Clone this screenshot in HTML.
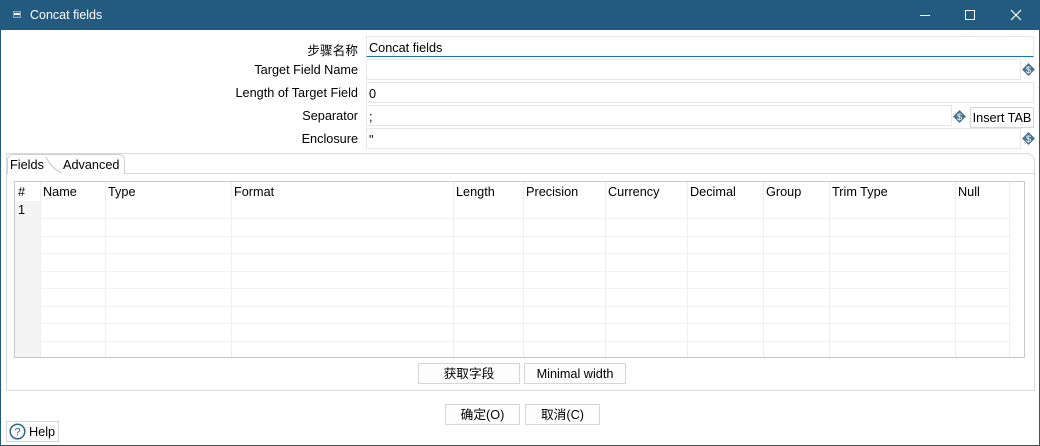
<!DOCTYPE html>
<html><head><meta charset="utf-8"><style>
*{box-sizing:border-box;margin:0;padding:0}
body{width:1040px;height:446px;overflow:hidden;background:#fff;font-family:"Liberation Sans","Noto Sans CJK SC",sans-serif;font-size:12.7px;color:#000;position:relative}
.a{position:absolute}
#win{left:0;top:0;width:1040px;height:446px;border:1px solid #235a80;border-top:none}
#tb{left:0;top:0;width:1040px;height:30px;background:#235a80;color:#fff}
.lbl{text-align:right;width:300px;left:58px}
.in{background:#fff;border:1px solid #e6e6e6;height:21px;padding:3px 2px 1px;line-height:17px}
.btn{background:#fdfdfd;border:1px solid #d6d6d6;text-align:center;line-height:20px;height:21px}
.dl{width:13px;height:13px}
.hd{top:183px;height:19px;line-height:19px;padding-left:3px}
.vl{top:182px;width:1px;height:175px;background:#eeeeee}
.hl{left:40px;width:969px;height:1px;background:#f1f1f1}
</style></head><body>
<div class="a" id="win"></div>
<div class="a" id="tb">
 <div class="a" style="left:13px;top:11px;width:8px;height:7px;background:#3b6a8c;border:1px solid #8aa6bd"></div>
 <div class="a" style="left:14px;top:13px;width:6px;height:2px;background:#fff"></div>
 <div class="a" style="left:30px;top:8px;font-size:12.5px">Concat fields</div>
 <div class="a" style="left:920px;top:15px;width:10px;height:1px;background:#fff"></div>
 <div class="a" style="left:965px;top:10px;width:10px;height:10px;border:1px solid #fff"></div>
 <svg class="a" style="left:1010px;top:9px" width="12" height="12"><path d="M1 1L11 11M11 1L1 11" stroke="#fff" stroke-width="1.2"/></svg>
</div>

<div class="a lbl" style="top:40px">步骤名称</div>
<div class="a lbl" style="top:63px">Target Field Name</div>
<div class="a lbl" style="top:86px">Length of Target Field</div>
<div class="a lbl" style="top:109px">Separator</div>
<div class="a lbl" style="top:132px">Enclosure</div>

<div class="a in" style="left:366px;top:36px;width:668px;border-bottom:1px solid #1a73c8">Concat fields</div>
<div class="a in" style="left:366px;top:59px;width:655px"></div>
<div class="a in" style="left:366px;top:82px;width:668px">0</div>
<div class="a in" style="left:366px;top:105px;width:586px">;</div>
<div class="a in" style="left:366px;top:128px;width:655px">"</div>
<svg class="a dl" style="left:1022px;top:63px" viewBox="0 0 13 13"><path d="M6.5 0L13 6.5 6.5 13 0 6.5Z" fill="#4d7592"/><text x="6.5" y="10" font-size="9" fill="#fff" text-anchor="middle" font-family="Liberation Sans">$</text></svg>
<svg class="a dl" style="left:953px;top:110px" viewBox="0 0 13 13"><path d="M6.5 0L13 6.5 6.5 13 0 6.5Z" fill="#4d7592"/><text x="6.5" y="10" font-size="9" fill="#fff" text-anchor="middle" font-family="Liberation Sans">$</text></svg>
<svg class="a dl" style="left:1022px;top:132px" viewBox="0 0 13 13"><path d="M6.5 0L13 6.5 6.5 13 0 6.5Z" fill="#4d7592"/><text x="6.5" y="10" font-size="9" fill="#fff" text-anchor="middle" font-family="Liberation Sans">$</text></svg>
<div class="a btn" style="left:970px;top:107px;width:64px">Insert TAB</div>

<div class="a" style="left:6px;top:153px;width:1029px;height:238px;border:1px solid #d9d9d9;border-radius:0 8px 0 0"></div>
<div class="a" style="left:7px;top:173px;width:1027px;height:1px;background:#d9d9d9"></div>
<div class="a" style="left:7px;top:154px;width:118px;height:20px;border:1px solid #d0d0d0;border-bottom:none;border-radius:6px 6px 0 0;background:#fff"></div>
<div class="a" style="left:10px;top:158px">Fields</div>
<div class="a" style="left:63px;top:158px">Advanced</div>
<svg class="a" style="left:44px;top:155px" width="20" height="20"><path d="M2 2Q8 14 18 18" stroke="#c8c8c8" fill="none"/></svg>

<div class="a" style="left:14px;top:181px;width:1011px;height:177px;border:1px solid #c8c8c8"></div>
<div class="a" style="left:15px;top:201px;width:25px;height:156px;background:#f4f4f4"></div>
<div class="a hl" style="top:218px"></div><div class="a hl" style="top:236px"></div><div class="a hl" style="top:253px"></div><div class="a hl" style="top:271px"></div><div class="a hl" style="top:288px"></div><div class="a hl" style="top:306px"></div><div class="a hl" style="top:323px"></div><div class="a hl" style="top:341px"></div>
<div class="a vl" style="left:40px"></div><div class="a vl" style="left:105px"></div><div class="a vl" style="left:231px"></div><div class="a vl" style="left:453px"></div><div class="a vl" style="left:523px"></div><div class="a vl" style="left:605px"></div><div class="a vl" style="left:687px"></div><div class="a vl" style="left:763px"></div><div class="a vl" style="left:829px"></div><div class="a vl" style="left:955px"></div><div class="a vl" style="left:1009px"></div>
<div class="a hd" style="left:15px">#</div>
<div class="a hd" style="left:40px">Name</div><div class="a hd" style="left:105px">Type</div><div class="a hd" style="left:231px">Format</div><div class="a hd" style="left:453px">Length</div><div class="a hd" style="left:523px">Precision</div><div class="a hd" style="left:605px">Currency</div><div class="a hd" style="left:687px">Decimal</div><div class="a hd" style="left:763px">Group</div><div class="a hd" style="left:829px">Trim Type</div><div class="a hd" style="left:955px">Null</div>
<div class="a" style="left:18px;top:203px">1</div>

<div class="a btn" style="left:418px;top:363px;width:102px">获取字段</div>
<div class="a btn" style="left:524px;top:363px;width:102px">Minimal width</div>
<div class="a btn" style="left:445px;top:404px;width:75px">确定(O)</div>
<div class="a btn" style="left:525px;top:404px;width:75px">取消(C)</div>
<div class="a btn" style="left:6px;top:421px;width:53px;text-align:left;padding-left:22px">Help</div>
<svg class="a" style="left:9px;top:423px" width="17" height="17"><circle cx="8.5" cy="8.5" r="7.3" fill="none" stroke="#2f6690" stroke-width="1.5"/><text x="8.5" y="12.5" font-size="11" fill="#2f6690" text-anchor="middle" font-family="Liberation Sans">?</text></svg>
</body></html>
